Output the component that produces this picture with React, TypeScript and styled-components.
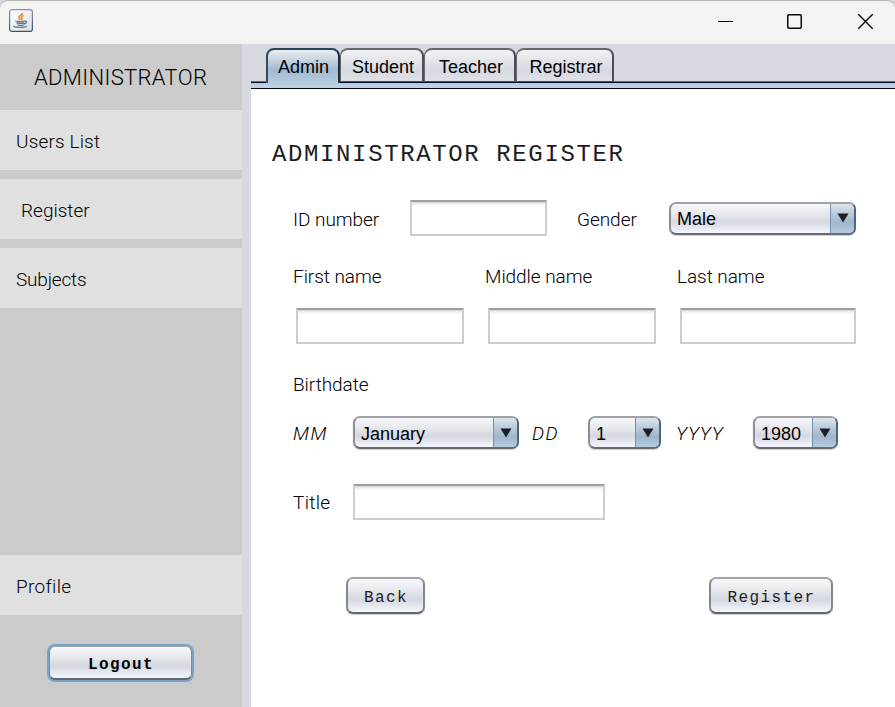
import React from "react";
import styled, { createGlobalStyle, css } from "styled-components";

const GlobalStyle = createGlobalStyle`
  * { box-sizing: border-box; }
  html, body { margin: 0; padding: 0; overflow: hidden; background: #d6d9e0; }
`;

const Window = styled.div`
  width: 895px;
  height: 707px;
  display: flex;
  flex-direction: column;
  color: #000;
  font-family: "Liberation Sans", Arial, sans-serif;
  overflow: hidden;
`;

const TitleBar = styled.header`
  height: 44px;
  flex: none;
  display: flex;
  justify-content: space-between;
  background: #f3f3f1;
  border-top: 1px solid #b5b5b5;
  border-radius: 8px 8px 0 0;
  padding: 8px 0 0 9px;
`;

const WindowControls = styled.div`
  display: flex;
  width: 178px;
  height: 24px;
`;

const Body = styled.div`
  flex: 1;
  display: flex;
  min-height: 0;
`;

const Sidebar = styled.aside`
  width: 242px;
  flex: none;
  display: flex;
  flex-direction: column;
  align-items: stretch;
  background: #cbcbcb;
`;

const Label = styled.span<{ $size?: number; $spacing?: number; $width?: number; $italic?: boolean }>`
  display: block;
  flex: none;
  white-space: nowrap;
  font-family: Roboto, sans-serif;
  font-weight: 300;
  font-size: ${(p) => p.$size ?? 19}px;
  letter-spacing: ${(p) => p.$spacing ?? -0.05}px;
  font-style: ${(p) => (p.$italic ? "italic" : "normal")};
  width: ${(p) => (p.$width ? `${p.$width}px` : "auto")};
`;

const SidebarHeader = styled.div`
  height: 66px;
  flex: none;
  display: flex;
  align-items: center;
  padding-left: 34px;
`;

const NavItem = styled.div<{ $indent?: number; $last?: boolean }>`
  height: 60px;
  flex: none;
  display: flex;
  align-items: center;
  margin-bottom: ${(p) => (p.$last ? 0 : 9)}px;
  padding: 3px 0 0 ${(p) => p.$indent ?? 16}px;
  background: #e0e0e0;
`;

const Spacer = styled.div`
  flex: 1;
`;

const nimbus = css`
  background: linear-gradient(#f8f8fb 0%, #e6e8ed 35%, #d5d8e0 62%, #e2e5ee 78%, #f5f7ff 100%);
`;

const Button = styled.button<{ $width: number; $focused?: boolean }>`
  ${nimbus}
  width: ${(p) => p.$width}px;
  height: 37px;
  padding: 4px 0 0 1px;
  border: 2px solid;
  border-color: #a3a5a9 #85888c #63666c #85888c;
  border-radius: 7px;
  box-shadow: 0 1px 1px rgba(0, 0, 0, 0.2);
  font: ${(p) => (p.$focused ? 700 : 400)} 16px "Liberation Mono", "Courier New", monospace;
  letter-spacing: 1.4px;
  color: ${(p) => (p.$focused ? "#000" : "#1c1c1c")};
  ${(p) =>
    p.$focused &&
    css`
      height: 34px;
      padding-top: 5px;
      border-width: 1px 1px 2px;
      border-radius: 6px;
      box-shadow: 0 0 0 2px #76a2cf;
    `}
`;

const LogoutArea = styled.div`
  height: 92px;
  flex: none;
  padding: 31px 0 0 49px;
`;

const Main = styled.main`
  flex: 1;
  display: flex;
  flex-direction: column;
  margin-left: 9px;
  background: #fff;
`;

const TabStrip = styled.nav`
  height: 45px;
  flex: none;
  display: flex;
  align-items: flex-start;
  padding: 4px 0 0 15px;
  background: linear-gradient(
    #d6d9e0 0 37px, #6b6e7c 37px 38px, #0b0b20 38px 39px, #b5cce2 39px 41px, #bdd2e3 41px 44px, #05050d 44px
  );
`;

const Tab = styled.div<{ $width: number; $active?: boolean }>`
  width: ${(p) => p.$width}px;
  height: ${(p) => (p.$active ? 35 : 34)}px;
  padding: 6px 0 0 ${(p) => (p.$active ? 1 : 3)}px;
  text-align: center;
  font-size: 18px;
  line-height: 22px;
  border: 2px solid;
  border-color: ${(p) => (p.$active ? "#2b4459 #1d2c40 transparent #34495c" : "#66686e #4b4d5b #4b4d5b #66686e")};
  border-bottom-width: ${(p) => (p.$active ? 0 : 1)}px;
  border-left-width: ${(p) => (p.$active ? 2 : 1)}px;
  border-radius: 8px 8px 0 0;
  background: ${(p) =>
    p.$active
      ? "linear-gradient(#e9eff4 0%, #c3d0dc 35%, #a2b9cf 60%, #b4cbe0 100%) padding-box"
      : "linear-gradient(#f2f3f6 0%, #e3e5ea 35%, #d6d9e0 65%, #dee1e8 100%)"};
`;

const Heading = styled.h1`
  margin: 50px 0 0 21px;
  height: 32px;
  color: #1c1c1c;
  font: 400 24px/32px "Liberation Mono", "Courier New", monospace;
  letter-spacing: 1.62px;
  white-space: nowrap;
`;

const Row = styled.div<{ $top: number; $height: number; $left?: number }>`
  flex: none;
  display: flex;
  align-items: center;
  height: ${(p) => p.$height}px;
  margin: ${(p) => p.$top}px 0 0 ${(p) => p.$left ?? 42}px;
`;

const FieldRow = styled(Row)`
  & > ${Label} {
    padding-top: 2px;
  }
`;

const Field = styled.input<{ $width: number; $gap?: number }>`
  flex: none;
  width: ${(p) => p.$width}px;
  height: 36px;
  margin-right: ${(p) => p.$gap ?? 0}px;
  border: 2px solid #cdcdcd;
  border-top-color: #a0a0a0;
  border-radius: 0;
  background: linear-gradient(#cfcfcf, #f0f0f0 2px, #fff 4px);
  outline: none;
`;

const Combo = styled.div<{ $width: number; $gap?: number }>`
  ${nimbus}
  flex: none;
  display: flex;
  align-items: center;
  justify-content: space-between;
  width: ${(p) => p.$width}px;
  height: 33px;
  margin-right: ${(p) => p.$gap ?? 0}px;
  padding-left: 6px;
  border: 2px solid;
  border-color: #a0a2a8 #4c667f #686b71 #8c8e94;
  border-radius: 7px;
  box-shadow: 0 1px 1px rgba(0, 0, 0, 0.2);
  font-size: 18px;
  line-height: 29px;
  overflow: hidden;
`;

const ComboText = styled.span`
  padding-top: 3px;
`;

const ComboArrow = styled.span`
  width: 24px;
  height: 33px;
  margin: -2px 0;
  display: flex;
  align-items: center;
  justify-content: center;
  border-left: 1px solid #7890a6;
  background: linear-gradient(#587088 0 1px, #dbe5ed 2px, #bdccd9 35%, #9fb6cc 62%, #b4cce2 94%, #3e5870 97%);
`;

const Actions = styled.div`
  display: flex;
  justify-content: space-between;
  width: 487px;
  margin: 57px 0 0 95px;
`;

function Select({ value, width, gap }: { value: string; width: number; gap?: number }) {
  return (
    <Combo $width={width} $gap={gap}>
      <ComboText>{value}</ComboText>
      <ComboArrow>
        <svg width="12" height="10" viewBox="0 0 12 10">
          <path d="M.5 .5h11L6 9.5z" fill="#1d1f22" />
        </svg>
      </ComboArrow>
    </Combo>
  );
}

function JavaIcon() {
  return (
    <svg width="24" height="23" viewBox="0 0 24 23" fill="none">
      <defs>
        <linearGradient id="frame" x1="0" y1="0" x2="0" y2="1">
          <stop offset="0" stopColor="#8398a8" />
          <stop offset="1" stopColor="#3d566c" />
        </linearGradient>
        <linearGradient id="face" x1="0" y1="0" x2="1" y2="1">
          <stop offset="0" stopColor="#fff" />
          <stop offset="1" stopColor="#dce0e5" />
        </linearGradient>
      </defs>
      <rect x=".6" y=".6" width="22.8" height="21.8" rx="2.5" fill="url(#face)" stroke="url(#frame)" strokeWidth="1.2" />
      <path d="M13.5 4c.4 2-4.5 2.5-3.5 5 .3.8 1.2 1.2 1.2 2M14.600 6.500c-2.600 1.100-2.800 2.100-1.600 3.100.5.600.1 1.200-.5 1.700" stroke="#ef8b36" strokeWidth="1.7" />
      <path d="M7 12c-.8.8 8 .8 9 0M7.500 13.800c1.800.7 6.300.7 8 0M8.500 15.800c1.500.6 4.800.6 6.300 0M15.800 12.200c2.800-.7 1.800 2.400-.8 2.800M4.800 17c-1.800 1.700 11 1.900 13 .2" stroke="#58798f" strokeWidth="1.300" />
    </svg>
  );
}

export default function App() {
  return (
    <>
      <GlobalStyle />
      <Window>
        <TitleBar>
          <JavaIcon />
          <WindowControls>
            <svg width="178" height="24" fill="none" stroke="#080808">
              <path d="M1 12.500h15" />
              <rect x="70.750" y="5.750" width="13.500" height="13.500" rx="1.200" strokeWidth="1.500" />
              <path d="M141.300 5.300l14.400 14.400M155.700 5.300l-14.400 14.400" strokeWidth="1.400" />
            </svg>
          </WindowControls>
        </TitleBar>
        <Body>
          <Sidebar>
            <SidebarHeader>
              <Label $size={22} $spacing={0.35}>ADMINISTRATOR</Label>
            </SidebarHeader>
            <NavItem><Label $spacing={0.15}>Users List</Label></NavItem>
            <NavItem $indent={21}><Label $spacing={0}>Register</Label></NavItem>
            <NavItem><Label $spacing={-0.2}>Subjects</Label></NavItem>
            <Spacer />
            <NavItem $last><Label $spacing={0.3}>Profile</Label></NavItem>
            <LogoutArea>
              <Button $width={143} $focused>Logout</Button>
            </LogoutArea>
          </Sidebar>
          <Main>
            <TabStrip>
              <Tab $width={74} $active>Admin</Tab>
              <Tab $width={84}>Student</Tab>
              <Tab $width={92}>Teacher</Tab>
              <Tab $width={98}>Registrar</Tab>
            </TabStrip>
            <Heading>ADMINISTRATOR REGISTER</Heading>
            <FieldRow $top={29} $height={36}>
              <Label $width={117}>ID number</Label>
              <Field $width={137} $gap={30} aria-label="ID number" />
              <Label $width={92}>Gender</Label>
              <Select value="Male" width={187} />
            </FieldRow>
            <Row $top={28} $height={24}>
              <Label $width={192}>First name</Label>
              <Label $width={192}>Middle name</Label>
              <Label>Last name</Label>
            </Row>
            <Row $top={20} $height={36} $left={45}>
              <Field $width={168} $gap={24} aria-label="First name" />
              <Field $width={168} $gap={24} aria-label="Middle name" />
              <Field $width={176} aria-label="Last name" />
            </Row>
            <Row $top={28} $height={24}>
              <Label>Birthdate</Label>
            </Row>
            <FieldRow $top={20} $height={33}>
              <Label $width={60} $italic $spacing={1.5}>MM</Label>
              <Select value="January" width={166} gap={13} />
              <Label $width={56} $italic $spacing={1.5}>DD</Label>
              <Select value="1" width={73} gap={15} />
              <Label $width={77} $italic $spacing={0.7}>YYYY</Label>
              <Select value="1980" width={85} />
            </FieldRow>
            <Row $top={35} $height={36}>
              <Label $width={60} $spacing={0.3}>Title</Label>
              <Field $width={252} aria-label="Title" />
            </Row>
            <Actions>
              <Button $width={79}>Back</Button>
              <Button $width={124}>Register</Button>
            </Actions>
          </Main>
        </Body>
      </Window>
    </>
  );
}
